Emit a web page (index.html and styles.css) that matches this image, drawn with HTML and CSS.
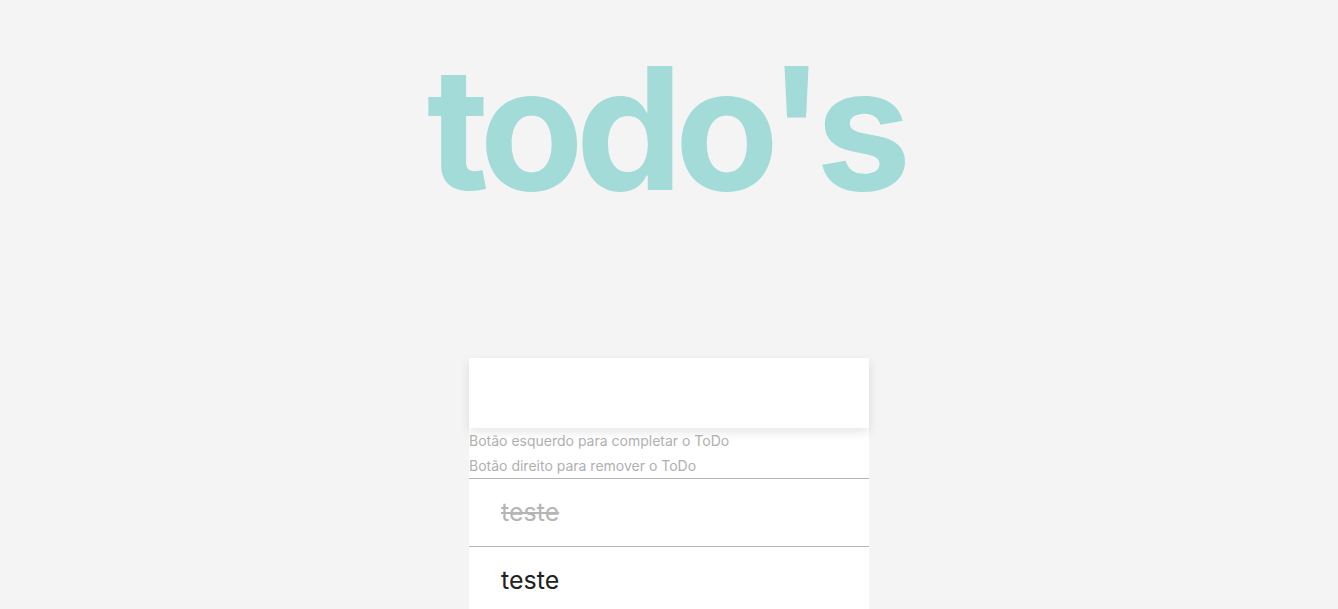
FILE: index.html
```html
<!DOCTYPE html>
<html>
<head>
    <link rel="stylesheet" href="styles.css">
</head>
<body>
    <h1 class="title">todo's</h1>

    <div class="todo-box">
        <input class="todo-input" type="text" autocomplete="off">
        <small class="hint">Botão esquerdo para completar o ToDo</small>
        <small class="hint">Botão direito para remover o ToDo</small>

        <ul class="todo-list">
            <li class="todo-item completed">teste</li>
            <li class="todo-item">teste</li>
        </ul>
    </div>
</body>
</html>
```

FILE: styles.css
```css
* {
    box-sizing: border-box;
}
body {
    margin: 0;
    background-color: #f4f4f4;
    color: #222;
    font-family: 'Inter', 'Lato', sans-serif;
    display: flex;
    flex-direction: column;
    align-items: center;
    height: 100vh;
    overflow: hidden;
}
.title {
    flex-shrink: 0;
    font-size: 170px;
    font-weight: 700;
    color: rgb(162, 219, 215);
    margin: 0;
    height: 358px;
    padding-top: 43px;
    padding-right: 8px;
    line-height: 1;
    letter-spacing: -8px;
}
.todo-box {
    flex-shrink: 0;
    width: 400px;
    background-color: white;
}
.todo-input {
    display: block;
    width: 100%;
    height: 70px;
    border: none;
    outline: none;
    padding: 16px 32px;
    font-size: 24px;
    box-shadow: 0 4px 10px rgba(0, 0, 0, 0.1);
}
.hint {
    display: block;
    font-size: 14px;
    color: #b0b0b0;
    line-height: 25px;
}
.todo-list {
    list-style: none;
    margin: 0;
    padding: 0;
}
.todo-item {
    border-top: 1px solid #b5b5b5;
    height: 68px;
    padding: 0 32px;
    font-size: 25px;
    line-height: 67px;
    cursor: pointer;
}
.completed {
    color: #b5b5b5;
    text-decoration: line-through;
}
```
